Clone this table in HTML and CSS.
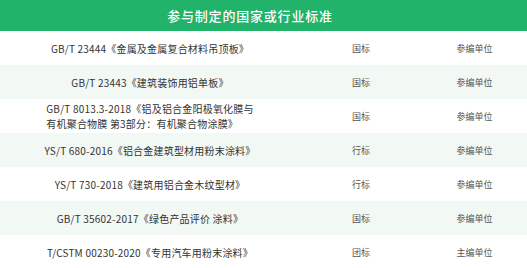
FILE: index.html
```html
<!DOCTYPE html>
<html lang="zh-CN">
<head>
    <meta charset="UTF-8">
    <title>参与制定的国家或行业标准</title>
    <link rel="stylesheet" href="styles.css">
</head>
<body>
<table class="std-table">
    <colgroup>
        <col class="col-name">
        <col class="col-type">
        <col class="col-role">
    </colgroup>
    <thead>
        <tr>
            <th colspan="3">参与制定的国家或行业标准</th>
        </tr>
    </thead>
    <tbody>
        <tr>
            <td class="std-name">GB/T 23444《金属及金属复合材料吊顶板》</td>
            <td class="std-type">国标</td>
            <td class="std-role">参编单位</td>
        </tr>
        <tr>
            <td class="std-name">GB/T 23443《建筑装饰用铝单板》</td>
            <td class="std-type">国标</td>
            <td class="std-role">参编单位</td>
        </tr>
        <tr>
            <td class="std-name"><span class="two-line">GB/T 8013.3-2018《铝及铝合金阳极氧化膜与<br>有机聚合物膜 第3部分：有机聚合物涂膜》</span></td>
            <td class="std-type">国标</td>
            <td class="std-role">参编单位</td>
        </tr>
        <tr>
            <td class="std-name">YS/T 680-2016《铝合金建筑型材用粉末涂料》</td>
            <td class="std-type">行标</td>
            <td class="std-role">参编单位</td>
        </tr>
        <tr>
            <td class="std-name">YS/T 730-2018《建筑用铝合金木纹型材》</td>
            <td class="std-type">行标</td>
            <td class="std-role">参编单位</td>
        </tr>
        <tr>
            <td class="std-name">GB/T 35602-2017《绿色产品评价 涂料》</td>
            <td class="std-type">国标</td>
            <td class="std-role">参编单位</td>
        </tr>
        <tr>
            <td class="std-name">T/CSTM 00230-2020《专用汽车用粉末涂料》</td>
            <td class="std-type">团标</td>
            <td class="std-role">主编单位</td>
        </tr>
    </tbody>
</table>
</body>
</html>
```

FILE: styles.css
```css
body {
    margin: 0;
    background: #fff;
    font-family: "Noto Sans CJK SC", "Noto Sans", sans-serif;
}
.std-table {
    width: 527px;
    border-collapse: collapse;
    table-layout: fixed;
}
.col-name {
    width: 300px;
}
.col-type {
    width: 122px;
}
.std-table th {
    height: 31px;
    padding: 0 27px 0 0;
    background: #22b36b;
    color: #fff;
    font-size: 13px;
    font-weight: 500;
    letter-spacing: 0.8px;
    text-align: center;
}
.std-table td {
    height: 34px;
    padding: 0;
    text-align: center;
    vertical-align: middle;
    white-space: nowrap;
}
.std-table tbody tr:nth-child(even) {
    background: #f2f8f4;
}
.std-name {
    color: #333;
    font-size: 10px;
    letter-spacing: 0.2px;
}
.std-type {
    color: #555;
    font-size: 9px;
}
.std-role {
    padding-right: 6px;
    color: #555;
    font-size: 9px;
}
.two-line {
    display: inline-block;
    text-align: left;
    line-height: 15px;
}
```
